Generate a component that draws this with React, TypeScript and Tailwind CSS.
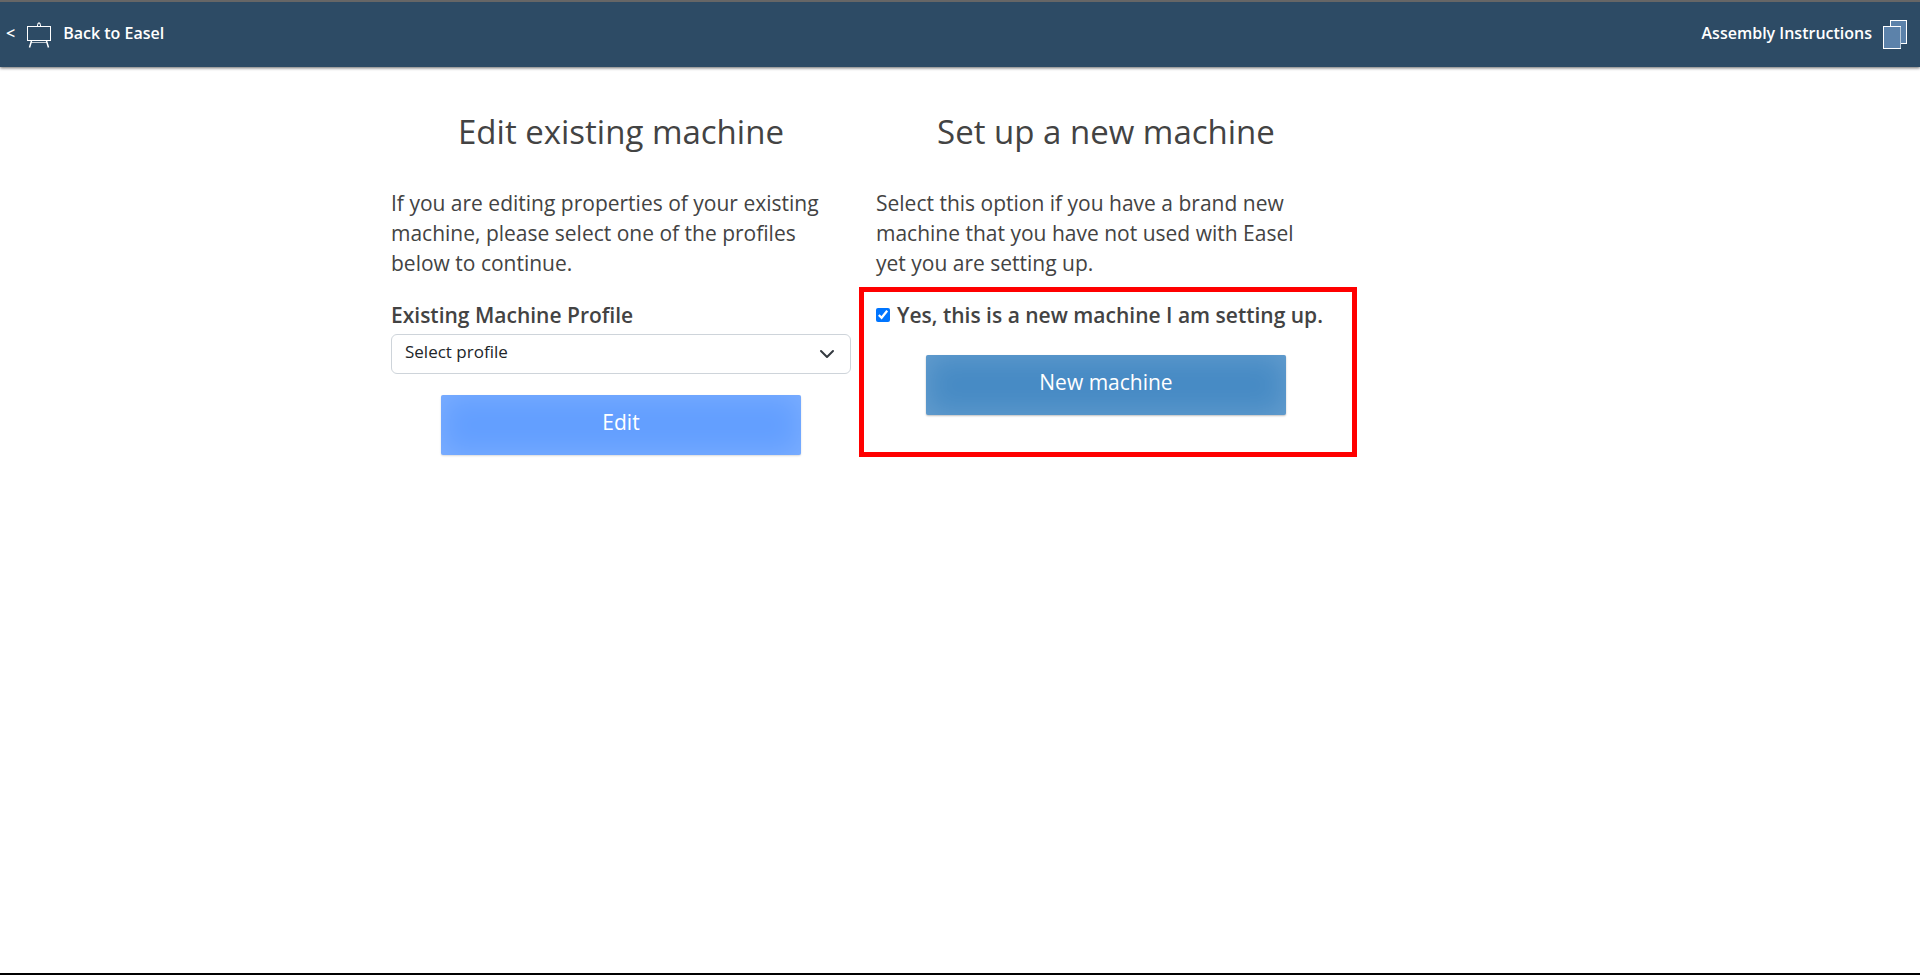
import { useState } from "react";
import type { ReactNode } from "react";

function EaselIcon() {
  return (
    <svg width="26" height="28" viewBox="0 0 26 28" fill="none" stroke="#fff" aria-hidden="true">
      <rect x="1.5" y="5.5" width="23" height="14" />
      <path d="M11.5 5V3.5a1.5 1.5 0 0 1 3 0V5M13 3.5V1.5" />
      <path d="M5 21.5h16" strokeOpacity="0.7" />
      <path d="M5.5 20 3.5 26.5M20.5 20l2 6.5" strokeWidth="1.5" />
    </svg>
  );
}

function PagesIcon() {
  return (
    <svg width="25" height="30" viewBox="0 0 25 30" fill="#5c82aa" aria-hidden="true">
      <rect x="7.5" y="0.5" width="16" height="23" stroke="#fff" />
      <rect x="0.5" y="6.5" width="17" height="22" stroke="#fff" />
      <path d="M17.5 7v21" stroke="#b9cadb" />
    </svg>
  );
}

function Heading({ children }: { children: ReactNode }) {
  return <h2 className="text-center text-[33px] font-normal leading-10">{children}</h2>;
}

export default function App() {
  const [isNew, setIsNew] = useState(true);

  return (
    <div className="flex min-h-screen flex-col bg-white pb-px font-['Open_Sans',sans-serif] text-[#434343]">
      <header className="flex h-[67px] items-center justify-between border-t-2 border-[#666] bg-[#2d4b65] pl-1.5 pr-3 text-base font-semibold text-white shadow-[0_1px_3px_rgba(0,0,0,0.6)]">
        <a href="#easel" className="flex items-center gap-[11px]">
          <span className="pb-1">&lt;</span>
          <EaselIcon />
          <span className="pb-1">Back to Easel</span>
        </a>
        <a href="#assembly" className="flex items-center gap-[11px]">
          <span className="pb-1">Assembly Instructions</span>
          <PagesIcon />
        </a>
      </header>

      <main className="mx-auto flex w-full max-w-[1140px] flex-1 flex-wrap content-start gap-[25px] pl-px pt-[45px]">
        <section className="w-[460px]">
          <Heading>Edit existing machine</Heading>
          <p className="mt-9 pr-4 text-[21px] leading-[30px]">
            If you are editing properties of your existing machine, please select one of the profiles
            below to continue.
          </p>
          <label htmlFor="profile" className="mt-[22px] block text-[21px] font-semibold leading-[30px]">
            Existing Machine Profile
          </label>
          <div className="relative mt-1">
            <select
              id="profile"
              className="block h-10 w-full appearance-none rounded-md border border-[#ced4da] bg-white px-[13px] pb-1 text-[17px] text-[#212529]"
            >
              <option>Select profile</option>
            </select>
            <svg
              className="pointer-events-none absolute right-4 top-3 h-4 w-4"
              viewBox="0 0 16 16"
              fill="none"
              stroke="#343a40"
              strokeWidth="2"
              strokeLinecap="round"
              strokeLinejoin="round"
              aria-hidden="true"
            >
              <path d="m2 5 6 6 6-6" />
            </svg>
          </div>
          <button
            type="button"
            className="mx-auto mt-[21px] block h-[60px] w-[360px] rounded-xs bg-[#639fff] pb-1 text-[21px] font-medium text-white shadow-[inset_0_0_30px_rgba(255,255,255,0.18),0_1px_2px_rgba(0,0,0,0.15)]"
          >
            Edit
          </button>
        </section>

        <section className="w-[460px]">
          <Heading>Set up a new machine</Heading>
          <p className="mt-9 pr-4 text-[21px] leading-[30px]">
            Select this option if you have a brand new machine that you have not used with Easel yet
            you are setting up.
          </p>
          <div className="-ml-[17px] -mr-[21px] mt-[9px] h-[170px] border-[5px] border-[#f00] pl-3 pr-4 pt-2">
            <label className="flex items-center gap-[7px] whitespace-nowrap text-[21px] font-semibold leading-[30px]">
              <input
                type="checkbox"
                checked={isNew}
                onChange={(e) => setIsNew(e.target.checked)}
                className="h-3.5 w-3.5 accent-[#0075ff]"
              />
              Yes, this is a new machine I am setting up.
            </label>
            <button
              type="button"
              className="mx-auto mt-[25px] block h-[60px] w-[360px] rounded-xs bg-[#478bc5] pb-1 text-[21px] font-medium text-white shadow-[inset_0_0_30px_rgba(255,255,255,0.18),0_1px_2px_rgba(0,0,0,0.25)]"
            >
              New machine
            </button>
          </div>
        </section>
      </main>

      <footer className="h-0.5 bg-black" />
    </div>
  );
}
